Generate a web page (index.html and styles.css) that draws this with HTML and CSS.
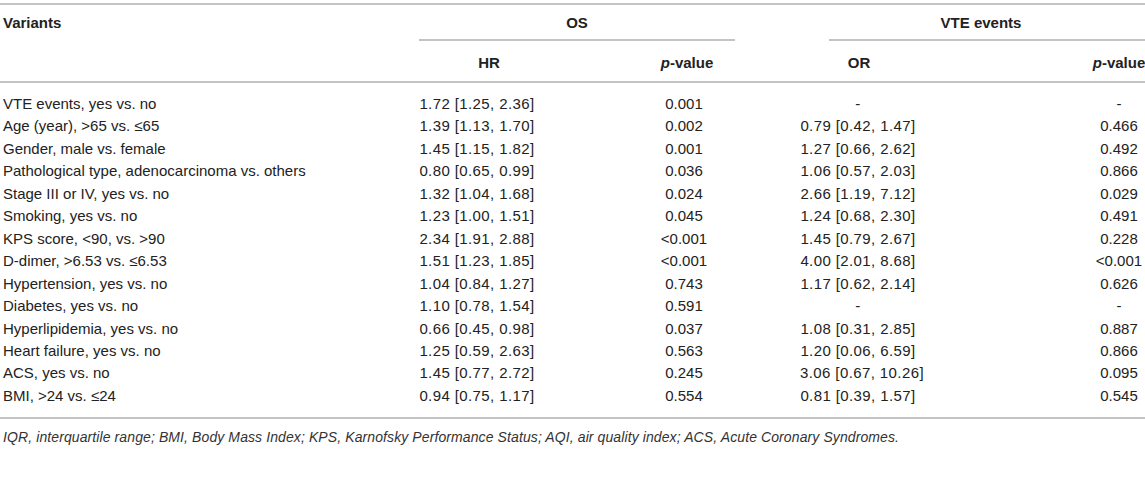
FILE: index.html
```html
<!DOCTYPE html>
<html>
<head>
<meta charset="utf-8">
<link rel="stylesheet" href="styles.css">
</head>
<body>
<div class="wrap">
<table class="tbl">
  <colgroup>
    <col class="c-var">
    <col class="c-hr">
    <col class="c-p1">
    <col class="c-or">
    <col class="c-p2">
  </colgroup>
  <thead>
    <tr class="h1">
      <th class="var">Variants</th>
      <th colspan="2" class="grp"><div class="grp-os">OS</div></th>
      <th colspan="2" class="grp"><div class="grp-vte">VTE events</div></th>
    </tr>
    <tr class="h2">
      <th class="var"></th>
      <th class="hr">HR</th>
      <th class="p1"><i>p</i>-value</th>
      <th class="or">OR</th>
      <th class="p2"><i>p</i>-value</th>
    </tr>
  </thead>
  <tbody>
    <tr class="first"><td class="var">VTE events, yes vs. no</td><td class="hr">1.72 [1.25, 2.36]</td><td class="p1">0.001</td><td class="or">-</td><td class="p2">-</td></tr>
    <tr><td class="var">Age (year), &gt;65 vs. ≤65</td><td class="hr">1.39 [1.13, 1.70]</td><td class="p1">0.002</td><td class="or">0.79 [0.42, 1.47]</td><td class="p2">0.466</td></tr>
    <tr><td class="var">Gender, male vs. female</td><td class="hr">1.45 [1.15, 1.82]</td><td class="p1">0.001</td><td class="or">1.27 [0.66, 2.62]</td><td class="p2">0.492</td></tr>
    <tr><td class="var">Pathological type, adenocarcinoma vs. others</td><td class="hr">0.80 [0.65, 0.99]</td><td class="p1">0.036</td><td class="or">1.06 [0.57, 2.03]</td><td class="p2">0.866</td></tr>
    <tr><td class="var">Stage III or IV, yes vs. no</td><td class="hr">1.32 [1.04, 1.68]</td><td class="p1">0.024</td><td class="or">2.66 [1.19, 7.12]</td><td class="p2">0.029</td></tr>
    <tr><td class="var">Smoking, yes vs. no</td><td class="hr">1.23 [1.00, 1.51]</td><td class="p1">0.045</td><td class="or">1.24 [0.68, 2.30]</td><td class="p2">0.491</td></tr>
    <tr><td class="var">KPS score, &lt;90, vs. &gt;90</td><td class="hr">2.34 [1.91, 2.88]</td><td class="p1">&lt;0.001</td><td class="or">1.45 [0.79, 2.67]</td><td class="p2">0.228</td></tr>
    <tr><td class="var">D-dimer, &gt;6.53 vs. ≤6.53</td><td class="hr">1.51 [1.23, 1.85]</td><td class="p1">&lt;0.001</td><td class="or">4.00 [2.01, 8.68]</td><td class="p2">&lt;0.001</td></tr>
    <tr><td class="var">Hypertension, yes vs. no</td><td class="hr">1.04 [0.84, 1.27]</td><td class="p1">0.743</td><td class="or">1.17 [0.62, 2.14]</td><td class="p2">0.626</td></tr>
    <tr><td class="var">Diabetes, yes vs. no</td><td class="hr">1.10 [0.78, 1.54]</td><td class="p1">0.591</td><td class="or">-</td><td class="p2">-</td></tr>
    <tr><td class="var">Hyperlipidemia, yes vs. no</td><td class="hr">0.66 [0.45, 0.98]</td><td class="p1">0.037</td><td class="or">1.08 [0.31, 2.85]</td><td class="p2">0.887</td></tr>
    <tr><td class="var">Heart failure, yes vs. no</td><td class="hr">1.25 [0.59, 2.63]</td><td class="p1">0.563</td><td class="or">1.20 [0.06, 6.59]</td><td class="p2">0.866</td></tr>
    <tr><td class="var">ACS, yes vs. no</td><td class="hr">1.45 [0.77, 2.72]</td><td class="p1">0.245</td><td class="or">3.06 [0.67, 10.26]</td><td class="p2">0.095</td></tr>
    <tr class="last"><td class="var">BMI, &gt;24 vs. ≤24</td><td class="hr">0.94 [0.75, 1.17]</td><td class="p1">0.554</td><td class="or">0.81 [0.39, 1.57]</td><td class="p2">0.545</td></tr>
  </tbody>
</table>
<p class="note">IQR, interquartile range; BMI, Body Mass Index; KPS, Karnofsky Performance Status; AQI, air quality index; ACS, Acute Coronary Syndromes.</p>
</div>
</body>
</html>
```

FILE: styles.css
```css
html, body {
  margin: 0;
  padding: 0;
  background: #ffffff;
}
body {
  font-family: "Liberation Sans", Arial, sans-serif;
  color: #222222;
  overflow: hidden;
}
.wrap {
  width: 1145px;
  overflow: hidden;
  padding-top: 3px;
}
.tbl {
  width: 1318px;
  table-layout: fixed;
  border-collapse: separate;
  border-spacing: 0;
  font-size: 15px;
}
.c-var { width: 400px; }
.c-hr { width: 160px; }
.c-p1 { width: 240px; }
.c-or { width: 120px; }
.c-p2 { width: 398px; }

th, td {
  padding: 0;
  text-align: center;
  white-space: nowrap;
}
th {
  font-weight: bold;
  line-height: 18px;
}
th i { font-style: italic; }

.h1 th {
  border-top: 2px solid #c4c4c4;
  vertical-align: top;
}
.h1 th.var {
  padding: 9px 0 9px 3px;
  text-align: left;
}
.grp-os {
  margin: 0 65px 0 19px;
  padding: 9px 0 7px;
  border-bottom: 2px solid #c4c4c4;
}
.grp-vte {
  margin: 0 0 0 29px;
  padding: 9px 185px 7px 0;
  border-bottom: 2px solid #c4c4c4;
}
.h2 th {
  padding-top: 13px;
  padding-bottom: 9px;
  border-bottom: 2px solid #c4c4c4;
}
.h2 th.hr { padding-left: 18px; }
.h2 th.p1 { padding-left: 14px; }
.h2 th.or { padding-right: 2px; }

td {
  line-height: 22.46px;
}
td.var {
  text-align: left;
  padding-left: 3px;
}
td.hr {
  padding-right: 6px;
  letter-spacing: 0.4px;
}
td.p1 { padding-left: 8px; }
td.or {
  padding-right: 4px;
  letter-spacing: 0.4px;
}

.first td { padding-top: 10px; }
.last td {
  padding-bottom: 10px;
  border-bottom: 2px solid #c4c4c4;
}

.note {
  margin: 9px 0 0 3px;
  font-size: 14px;
  line-height: 18px;
  font-style: italic;
  letter-spacing: 0.1px;
  color: #333333;
}
```
